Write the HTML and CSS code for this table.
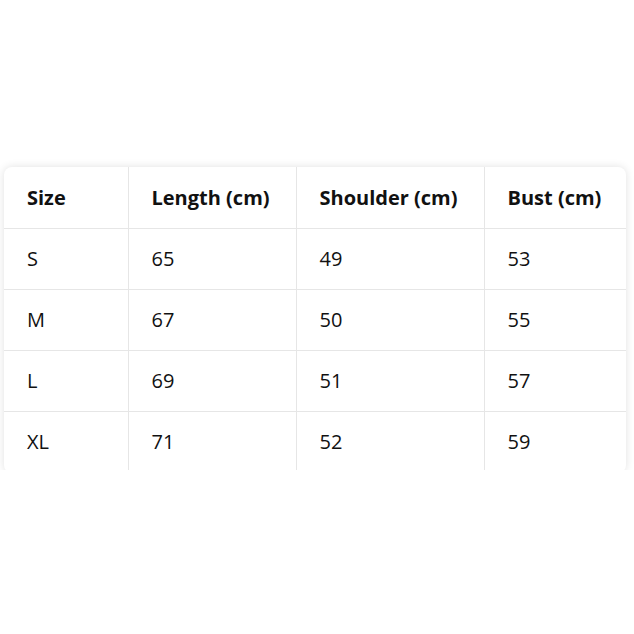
FILE: index.html
```html
<!DOCTYPE html>
<html>
<head>
<meta charset="utf-8">
<link rel="stylesheet" href="styles.css">
</head>
<body>
<div class="clip">
  <div class="card">
    <table class="sizes">
      <thead>
        <tr><th class="c1">Size</th><th class="c2">Length (cm)</th><th class="c3">Shoulder (cm)</th><th class="c4">Bust (cm)</th></tr>
      </thead>
      <tbody>
        <tr><td>S</td><td>65</td><td>49</td><td>53</td></tr>
        <tr><td>M</td><td>67</td><td>50</td><td>55</td></tr>
        <tr><td>L</td><td>69</td><td>51</td><td>57</td></tr>
        <tr><td>XL</td><td>71</td><td>52</td><td>59</td></tr>
      </tbody>
    </table>
  </div>
</div>
</body>
</html>
```
FILE: styles.css
```css
html, body { margin: 0; padding: 0; background: #fff; }
body { font-family: "Open Sans", "Noto Sans", sans-serif; color: #111; }
.clip {
  margin-top: 155px;
  height: 315px;
  overflow: hidden;
  padding: 12px 8px 0 4px;
  box-sizing: border-box;
}
.card {
  width: 622px;
  background: #fff;
  border-radius: 8px;
  box-shadow: 0 0 8px rgba(0,0,0,0.12);
  overflow: hidden;
}
.sizes { border-collapse: collapse; width: 622px; table-layout: fixed; }
.sizes th, .sizes td {
  height: 61px;
  padding: 0 0 0 23px;
  text-align: left;
  vertical-align: middle;
  border-bottom: 1px solid #e6e6e6;
  border-right: 1px solid #e6e6e6;
  font-size: 20px;
  box-sizing: border-box;
  white-space: nowrap;
}
.sizes th { font-weight: 700; }
.sizes td { font-weight: 400; }
.sizes th:last-child, .sizes td:last-child { border-right: none; }
.c1 { width: 124px; }
.c2 { width: 168px; }
.c3 { width: 188px; }
.c4 { width: 142px; }
```
